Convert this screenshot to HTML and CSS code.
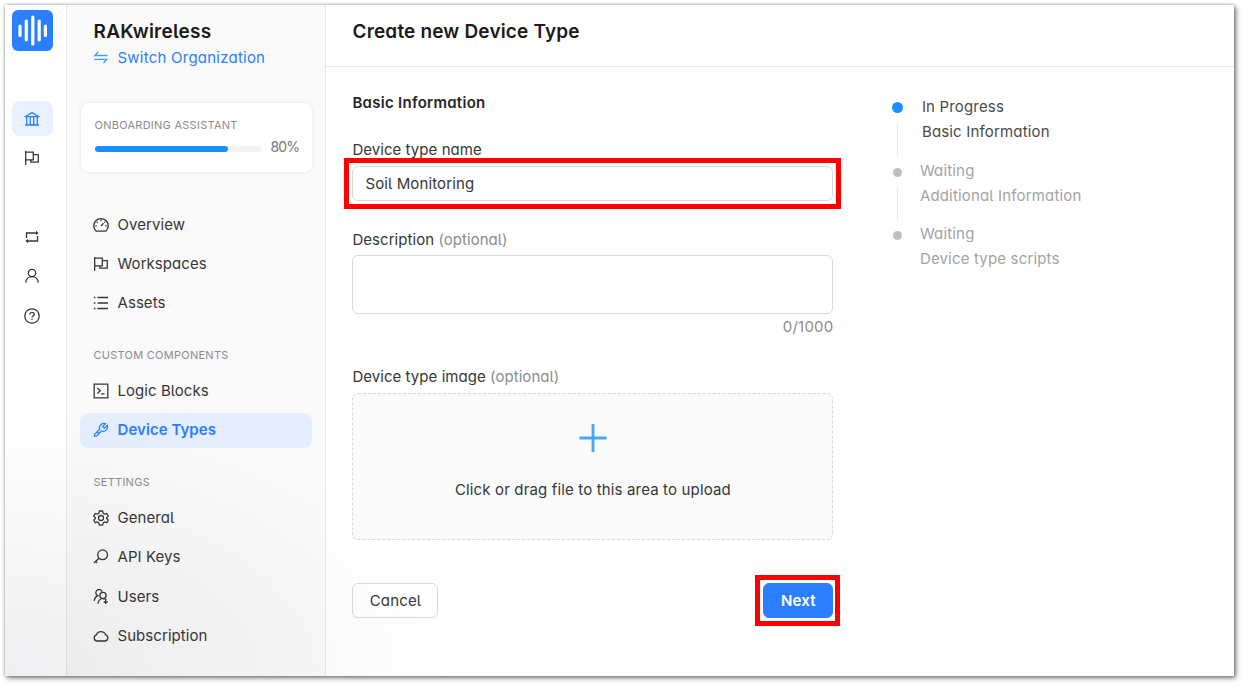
FILE: index.html
```html
<!DOCTYPE html>
<html lang="en">
<head>
<meta charset="utf-8">
<title>Create new Device Type</title>
<link rel="stylesheet" href="styles.css">
</head>
<body>
<svg width="0" height="0" class="defs">
  <symbol id="flag" viewBox="0 0 16 16"><path d="M1.7 1v14M1.7 2.2h7.6v7.6H1.7M9.3 4.6h5v7.6H6.9V9.8"/></symbol>
</svg>
<div class="window">
  <nav class="rail">
    <div class="logo"><svg viewBox="0 0 41 41"><path d="M8 16v9.500M14.300 11v19M20.800 7v27M27.200 11v19M33.400 16v9.500"/></svg></div>
    <div class="rail-group">
      <a class="rail-item current"><svg class="icon" viewBox="0 0 16 16"><path d="M1.2 5.7 8 1.6l6.8 4.1zM2.7 6v7.4M6.2 6v7.4M9.8 6v7.4M13.3 6v7.4M1 14h14"/></svg></a>
      <a class="rail-item"><svg class="icon"><use href="#flag"/></svg></a>
    </div>
    <div class="rail-group lower">
      <a class="rail-item"><svg class="icon" viewBox="0 0 16 16"><path d="M2.500 9V4h10.500M13.500 7v5H3"/><path class="solid" d="M12 1.800 14.600 4 12 6.200zM4 9.800 1.400 12 4 14.200z"/></svg></a>
      <a class="rail-item"><svg class="icon" viewBox="0 0 16 16"><circle cx="8" cy="5" r="3.700"/><path d="M1.700 14.600C2 11 4.700 8.700 8 8.700s6 2.300 6.300 5.900"/></svg></a>
      <a class="rail-item"><svg class="icon" viewBox="0 0 16 16"><circle cx="8" cy="8" r="7.200"/><path d="M5.800 6.500c0-1.300 1-2.100 2.200-2.100s2.200.8 2.200 2c0 1.700-2.200 1.600-2.200 3.200M8 10.800v1.200"/></svg></a>
    </div>
  </nav>
  <aside class="sidebar">
    <h2 class="org">RAKwireless</h2>
    <a class="switch"><svg class="icon" viewBox="0 0 16 16"><path d="M14.500 5.500H1.800L5.300 1.800M1.200 9.300h12.600L10.500 13"/></svg><span>Switch Organization</span></a>
    <section class="assistant">
      <div class="caption">ONBOARDING ASSISTANT</div>
      <div class="progress"><div class="track"><div class="bar" style="width:80%"></div></div><span>80%</span></div>
    </section>
    <div class="menu">
      <a class="item"><svg class="icon" viewBox="0 0 16 16"><path d="M3.300 14.200A7.200 7.200 0 1 1 12.700 14.200zM8 9l2.500-2.700M8 2.800v1.500M3.700 4.600l1 1M12.300 4.600l-1 1M2.300 8.800h1.500M12.200 8.800h1.500"/></svg><span>Overview</span></a>
      <a class="item"><svg class="icon"><use href="#flag"/></svg><span>Workspaces</span></a>
      <a class="item"><svg class="icon" viewBox="0 0 16 16"><path d="M4.500 2.500H15M4.500 8H15M4.500 13.500H15M.8 2.500h1.600M.8 8h1.600M.8 13.500h1.600"/></svg><span>Assets</span></a>
    </div>
    <div class="caption heading">CUSTOM COMPONENTS</div>
    <div class="menu">
      <a class="item"><svg class="icon" viewBox="0 0 16 16"><path d="M1.200 1.200h13.600v13.600H1.200zM4.300 5l3 2.700-3 2.700M8 10.800h3.500"/></svg><span>Logic Blocks</span></a>
      <a class="item active"><svg class="icon" viewBox="0 0 16 16"><path d="M12.400 1.700a4.400 4.400 0 0 0-5.700 5.600L1.500 12.400v1.800h2l5-5.200a4.400 4.400 0 0 0 5.800-5.500l-3 2.700-1.600-1.700zM5.700 10.800l-2.200-1"/></svg><span>Device Types</span></a>
    </div>
    <div class="caption heading">SETTINGS</div>
    <div class="menu">
      <a class="item"><svg class="icon" viewBox="0 0 16 16"><path d="M6.400 1h3.200l.6 2.300 1.300.8 2.300-.7 1.500 2.700-1.700 1.600v.7l1.700 1.600-1.500 2.700-2.300-.7-1.300.8-.6 2.300H6.400l-.6-2.300-1.300-.8-2.300.7L.7 10l1.700-1.600v-.7L.7 6.100l1.500-2.700 2.300.7 1.300-.8z"/><circle cx="8" cy="8" r="2.500"/></svg><span>General</span></a>
      <a class="item"><svg class="icon" viewBox="0 0 16 16"><circle cx="9.600" cy="5.800" r="4.900"/><path d="M6 9.300 1 14M2.500 12.300l1.700 1.600"/></svg><span>API Keys</span></a>
      <a class="item"><svg class="icon" viewBox="0 0 16 16"><path d="M9.100 2.800A3.200 3.200 0 1 0 4.800 6.700C2.500 7.800 1.400 9.500 1.200 11.900M8.800 9.500C6.700 10.300 5.200 12 5 14.700"/><circle cx="10" cy="6.500" r="3.100"/><path d="M10 9.600c1.500 0 2.700.5 3.500 1.300M10.700 13h4M12.700 11v4"/></svg><span>Users</span></a>
      <a class="item"><svg class="icon" viewBox="0 0 16 16"><path d="M3.900 13a3.200 3.200 0 0 1-.5-6.200 4.900 4.900 0 0 1 9.200 0 3.200 3.200 0 0 1-.5 6.200z"/></svg><span>Subscription</span></a>
    </div>
  </aside>
  <main class="main">
    <header class="topbar"><h1>Create new Device Type</h1></header>
    <div class="content">
      <form class="form">
        <h3>Basic Information</h3>
        <label class="label name">Device type name</label>
        <div class="mark"><div class="input">Soil Monitoring</div></div>
        <label class="label desc">Description <i>(optional)</i></label>
        <div class="textarea"></div>
        <div class="count">0/1000</div>
        <label class="label image">Device type image <i>(optional)</i></label>
        <div class="upload"><svg viewBox="0 0 28 28"><path d="M14 0v28M.5 14h27"/></svg><p>Click or drag file to this area to upload</p></div>
        <div class="actions"><div class="button">Cancel</div><div class="mark next"><div class="button primary">Next</div></div></div>
      </form>
      <ol class="steps">
        <li class="step now"><div>In Progress</div><div>Basic Information</div></li>
        <li class="step"><div>Waiting</div><div>Additional Information</div></li>
        <li class="step"><div>Waiting</div><div>Device type scripts</div></li>
      </ol>
    </div>
  </main>
</div>
</body>
</html>
```

FILE: styles.css
```css
* { box-sizing: border-box; }
body {
  margin: 0;
  padding: 5px 9px 9px 5px;
  height: 685px;
  overflow: hidden;
  background: #fff;
  color: #363636;
  font: 15px/24px Inter, sans-serif;
  font-feature-settings: "cv11", "cv05";
}
h1, h2, h3, p, ol { margin: 0; padding: 0; font-weight: 600; }
i { font-style: normal; color: #8c8c8c; }
.defs { position: absolute; }
.window {
  position: relative;
  display: flex;
  height: 671px;
  background: #fff;
  box-shadow: 0 0 3px rgba(0, 0, 0, .3), 2px 2px 5px rgba(0, 0, 0, .5);
}
/* soft grey glow from the lower left corner */
.window::after {
  content: "";
  position: absolute;
  inset: 0;
  pointer-events: none;
  background: radial-gradient(ellipse 460px 270px at 0 100%, rgba(30, 40, 60, .075), rgba(30, 40, 60, .035) 50%, transparent);
}
.icon {
  flex: none;
  width: 16px;
  height: 16px;
  fill: none;
  stroke: currentColor;
  stroke-width: 1.3;
}
.solid { fill: currentColor; stroke: none; }

.rail { width: 62px; padding: 5px 0 0 6.500px; border-right: 1px solid #e8e8e8; }
.logo { width: 41px; height: 41px; border-radius: 6px; background: #2b7fff; }
.logo svg { display: block; stroke: #fff; stroke-width: 3.2; stroke-linecap: round; fill: none; }
.rail-group { display: grid; gap: 4.400px; margin-top: 50px; }
.rail-group.lower { margin-top: 44px; }
.rail-item { display: grid; place-items: center; width: 41px; height: 35px; border-radius: 8px; }
.rail-item.current { color: #2b7fff; background: #e8f1ff; }

.sidebar { width: 259px; padding: 13px 13px 0; background: #fafafa; border-right: 1px solid #e8e8e8; }
.org { padding-left: 13.500px; font-size: 19px; line-height: 27px; letter-spacing: .26px; color: #1a1a1a; }
.switch { display: flex; align-items: center; gap: 8.500px; height: 25px; padding-left: 13px; letter-spacing: .23px; color: #2b7fff; }
.switch .icon { color: #40a0ff; }
.assistant {
  height: 69px;
  margin: 33px .5px 0;
  padding: 12px 14px;
  border-radius: 8px;
  background: #fff;
  box-shadow: 0 0 4px rgba(0, 0, 0, .09);
}
.caption { font-size: 11px; line-height: 20px; letter-spacing: .26px; color: #8c8c8c; }
.progress { display: flex; align-items: center; gap: 9px; height: 24px; font-size: 14px; letter-spacing: -.9px; color: #777; }
.track { flex: none; width: 167px; height: 6px; margin-top: 3px; border-radius: 3px; background: #f3f3f3; }
.bar { height: 6px; border-radius: 3px; background: #1890ff; }
.menu { display: grid; gap: 4.300px; }
.assistant + .menu { margin-top: 35.400px; }
.item { display: flex; align-items: center; gap: 8.500px; height: 35px; padding-left: 13px; border-radius: 8px; letter-spacing: .06px; }
.item.active { color: #2b7fff; background: #e4eefc; font-weight: 600; }
.heading { margin: 24.300px 0 8.300px; padding-left: 13.500px; }

.main { flex: 1; }
.topbar { height: 62px; padding: 13px 26.500px; border-bottom: 1px solid #e8e8e8; }
h1 { font-size: 19px; line-height: 27px; letter-spacing: .17px; color: #1a1a1a; }
.content { display: flex; padding: 24px 26.400px; gap: 58.500px; }
.form { width: 481px; }
h3 { font-size: 15px; line-height: 24px; letter-spacing: .28px; color: #262626; }
.label { display: block; height: 24px; letter-spacing: .05px; }
.label.name { margin-top: 23px; }
.mark { margin: -4px -8px 0; padding: 3px; border: 5px solid #f00; }
.input { height: 35px; padding: 5px 12px; letter-spacing: .13px; border: 1px solid #d9d9d9; border-radius: 6px; }
.label.desc { margin-top: 19px; }
.textarea { height: 59px; margin-top: 3px; border: 1px solid #d9d9d9; border-radius: 6px; }
.count { margin-top: 1px; letter-spacing: .2px; text-align: right; color: #8c8c8c; }
.label.image { margin-top: 26px; }
.upload {
  display: flex;
  flex-direction: column;
  align-items: center;
  gap: 25px;
  height: 147px;
  margin-top: 4px;
  padding-top: 30px;
  border: 1px dashed #d9d9d9;
  border-radius: 6px;
  background: #fafafa;
  font-feature-settings: normal;
}
.upload svg { width: 28px; height: 28px; stroke: #40a9ff; stroke-width: 2.800; }
.upload p { padding-top: 1px; font-weight: 400; letter-spacing: .15px; }
.actions { display: flex; justify-content: space-between; margin-top: 43px; }
.button { width: 86px; height: 35px; line-height: 33px; text-align: center; letter-spacing: .15px; border: 1px solid #d9d9d9; border-radius: 6px; background: #fff; }
.mark.next { margin: -8px -7px 0 0; padding: 3px 2px 3px 3px; }
.primary { width: 70px; color: #fff; background: #2b7fff; border-color: #2b7fff; font-weight: 600; }

.steps { list-style: none; padding-top: 3px; font-weight: 400; }
.step { position: relative; height: 63.500px; padding-left: 28px; line-height: 25px; letter-spacing: .17px; color: #a3a3a3; }
.step.now { padding-left: 30px; color: #4a4a4a; }
.step::before { content: ""; position: absolute; left: 1.500px; top: 10px; width: 9px; height: 9px; border-radius: 50%; background: #bfbfbf; }
.step.now::before { left: .5px; top: 8px; width: 11px; height: 11px; background: #1890ff; }
.step:not(:last-child)::after { content: ""; position: absolute; left: 5px; top: 28px; width: 1px; height: 35px; background: #ebebeb; }
```
